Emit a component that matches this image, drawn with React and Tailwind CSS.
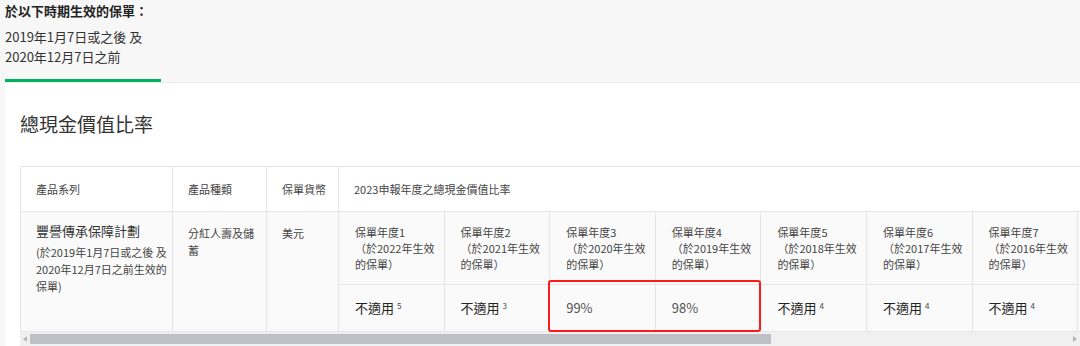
import React from "react";

const years = [
  { n: 1, y: 2022, v: "不適用", s: "5" },
  { n: 2, y: 2021, v: "不適用", s: "3" },
  { n: 3, y: 2020, v: "99%" },
  { n: 4, y: 2019, v: "98%" },
  { n: 5, y: 2018, v: "不適用", s: "4" },
  { n: 6, y: 2017, v: "不適用", s: "4" },
  { n: 7, y: 2016, v: "不適用", s: "4" },
  { n: 8, y: 2015, v: "不適用", s: "4" },
];

const font = { fontFamily: '"Noto Sans CJK TC", "Noto Sans", sans-serif' };

export default function App() {
  return (
    <div className="w-[1080px] h-[346px] overflow-hidden bg-[#f7f7f7] text-[#333]" style={font}>
      <div className="pl-[5px]">
        <div className="pt-[1px] text-[13px] font-bold leading-[20px] text-[#222]">於以下時期生效的保單：</div>
        <div className="mt-[6px] text-[13px] leading-[20px] text-[#333]">
          2019年1月7日或之後 及<br />2020年12月7日之前
        </div>
        <div className="mt-[12px] w-[156px] h-[3px] bg-[#00b259]" />
      </div>
      <div className="ml-[5px] bg-white border-t border-[#ececec]">
        <div className="pl-[15px] pt-[27px] pb-[28px] text-[19px] leading-[28px] text-[#333]">總現金價值比率</div>
        <div className="ml-[15px] relative">
          <div className="overflow-hidden">
            <table className="border-collapse table-fixed text-[11px] text-[#444]" style={{ width: 318 + 105.6 * 8 }}>
              <colgroup>
                <col className="w-[152px]" />
                <col className="w-[94px]" />
                <col className="w-[72px]" />
                {years.map((y) => (
                  <col key={y.n} className="w-[105.6px]" />
                ))}
              </colgroup>
              <tbody>
                <tr className="h-[45px] bg-white">
                  <td className="border border-[#e6e6e6] pl-[15px] align-middle">產品系列</td>
                  <td className="border border-[#e6e6e6] pl-[15px] align-middle">產品種類</td>
                  <td className="border border-[#e6e6e6] pl-[15px] align-middle">保單貨幣</td>
                  <td colSpan={8} className="border border-[#e6e6e6] pl-[15px] align-middle">2023申報年度之總現金價值比率</td>
                </tr>
                <tr className="h-[73px] bg-[#fafafa]">
                  <td rowSpan={2} className="border border-[#e6e6e6] pl-[15px] pt-[12px] align-top">
                    <div className="text-[13px] leading-[14px] mb-[6px] text-[#333]">豐譽傳承保障計劃</div>
                    <div className="text-[11px] leading-[17px] text-[#444]">
                      (於2019年1月7日或之後 及<br />2020年12月7日之前生效的<br />保單)
                    </div>
                  </td>
                  <td rowSpan={2} className="border border-[#e6e6e6] pl-[15px] pt-[13px] align-top leading-[17px]">
                    分紅人壽及儲<br />蓄
                  </td>
                  <td rowSpan={2} className="border border-[#e6e6e6] pl-[15px] pt-[13px] align-top leading-[17px]">美元</td>
                  {years.map((y) => (
                    <td key={y.n} className="border border-[#e6e6e6] pl-[16px] pt-[12px] align-top leading-[16px]">
                      保單年度{y.n}
                      <br />
                      （於{y.y}年生效
                      <br />
                      的保單）
                    </td>
                  ))}
                </tr>
                <tr className="h-[47px] bg-[#fafafa]">
                  {years.map((y) => (
                    <td key={y.n} className="border border-[#e6e6e6] pl-[16px] align-middle">
                      {y.s ? (
                        <span className="text-[13px] text-[#222]">
                          {y.v}
                          <sup className="ml-[3px] text-[8px] text-[#444]">{y.s}</sup>
                        </span>
                      ) : (
                        <span className="text-[13px] text-[#555]">{y.v}</span>
                      )}
                    </td>
                  ))}
                </tr>
              </tbody>
            </table>
          </div>
          <div className="h-[14px] bg-[#f0f0f0] flex items-center">
            <div className="w-[10px] flex justify-center">
              <svg width="4" height="6" viewBox="0 0 4 6"><path d="M4 0 L0 3 L4 6 Z" fill="#b5b5b5" /></svg>
            </div>
            <div className="w-[741px] h-[10px] bg-[#bfbfc6]" />
            <div className="flex-1" />
            <div className="w-[10px] flex justify-center">
              <svg width="4" height="6" viewBox="0 0 4 6"><path d="M0 0 L4 3 L0 6 Z" fill="#b5b5b5" /></svg>
            </div>
          </div>
          <div className="absolute left-[528px] top-[114px] w-[213px] h-[52px] border-2 border-[#ff1a1a] rounded-[3px]" />
        </div>
      </div>
    </div>
  );
}
